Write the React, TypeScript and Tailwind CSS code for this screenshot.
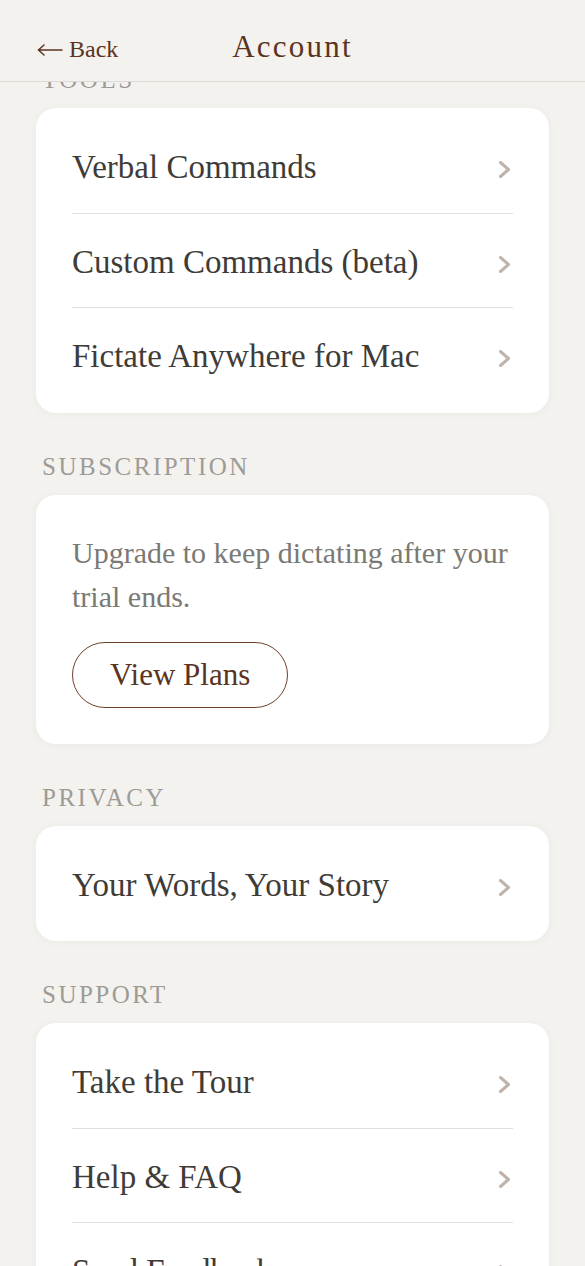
import React from "react";

const serif = "font-['Liberation_Serif','Times_New_Roman',serif]";

function Chevron() {
  return (
    <svg width="13" height="17" viewBox="0 0 13 17" className="mt-[8px] shrink-0" aria-hidden="true">
      <path d="M2.5 1.5 L10.5 8.5 L2.5 15.5" fill="none" stroke="#bfb3ab" strokeWidth="3" strokeLinejoin="round" strokeLinecap="round" />
    </svg>
  );
}

function BackArrow() {
  return (
    <svg width="26" height="12" viewBox="0 0 26 12" className="mr-[6px] self-center translate-y-[1px]" aria-hidden="true">
      <path d="M25 6 H1.6 M7 1 L1.4 6 L7 11" fill="none" stroke="#5b3321" strokeWidth="1.5" strokeLinecap="round" strokeLinejoin="round" />
    </svg>
  );
}

function SectionLabel({ children, first = false }: { children: React.ReactNode; first?: boolean }) {
  return (
    <div
      className={`${first ? "-mt-[16px]" : "mt-[40px]"} mb-[14px] pl-[6px] text-[25px] leading-[28px] tracking-[2.5px] uppercase text-[#9d9b96]`}
    >
      {children}
    </div>
  );
}

function Card({ children, className = "" }: { children: React.ReactNode; className?: string }) {
  return (
    <div className={`rounded-[20px] bg-white shadow-[0_1px_8px_rgba(60,50,40,0.05)] ${className}`}>{children}</div>
  );
}

function Row({ label, last = false }: { label: string; last?: boolean }) {
  return (
    <div
      className={`box-content flex h-[93.5px] items-center justify-between pr-[2px] ${last ? "" : "border-b border-[#e4dfda]"}`}
    >
      <span className="translate-y-[2px] text-[33px] leading-none text-[#3f3c38]">{label}</span>
      <Chevron />
    </div>
  );
}

function ListCard({ items }: { items: string[] }) {
  return (
    <Card className="px-[36px] py-[11px]">
      {items.map((item, i) => (
        <Row key={item} label={item} last={i === items.length - 1} />
      ))}
    </Card>
  );
}

export default function App() {
  return (
    <div className={`flex h-[1266px] w-full flex-col overflow-hidden bg-[#f3f2ef] ${serif}`}>
      <header className="grid h-[82px] shrink-0 grid-cols-[1fr_auto_1fr] items-baseline border-b border-[#dcd9d4] pt-[31px]">
        <button className="flex items-baseline justify-self-start pl-[37px] text-[24px] leading-none text-[#5b3321]">
          <BackArrow />
          Back
        </button>
        <h1 className="text-[31px] leading-none tracking-[2.2px] text-[#5b3321]">Account</h1>
        <div />
      </header>

      <main className="flex-1 overflow-hidden px-[36px]">
        <SectionLabel first>Tools</SectionLabel>
        <ListCard items={["Verbal Commands", "Custom Commands (beta)", "Fictate Anywhere for Mac"]} />

        <SectionLabel>Subscription</SectionLabel>
        <Card className="p-[36px]">
          <p className="text-[30px] leading-[44px] text-[#7b7974]">
            Upgrade to keep dictating after your trial ends.
          </p>
          <button className="mt-[23px] flex h-[66px] items-center rounded-full border border-[#6e3f28] px-[37px] text-[31px] leading-none text-[#5b3321]">
            View Plans
          </button>
        </Card>

        <SectionLabel>Privacy</SectionLabel>
        <ListCard items={["Your Words, Your Story"]} />

        <SectionLabel>Support</SectionLabel>
        <ListCard items={["Take the Tour", "Help & FAQ", "Send Feedback", "Contact Us"]} />
      </main>
    </div>
  );
}
